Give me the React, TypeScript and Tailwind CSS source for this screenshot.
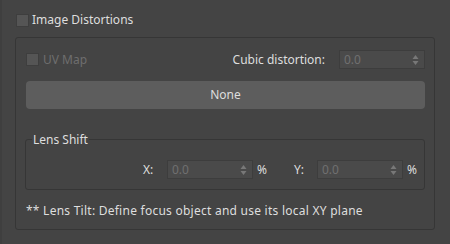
import React from "react";

const font = { fontFamily: '"Noto Sans", "Open Sans", sans-serif' };

function Spinner() {
  return (
    <svg width="7" height="12" viewBox="0 0 7 12" className="shrink-0">
      <path d="M3.5 1 L6.5 5 L0.5 5 Z" fill="#787878" />
      <path d="M3.5 11 L6.5 7 L0.5 7 Z" fill="#787878" />
    </svg>
  );
}

function NumInput() {
  return (
    <div className="w-[86px] h-[19px] bg-[#4a4a4a] border border-[#3d3d3d] flex items-center justify-between pl-[4px] pr-[5px]">
      <span className="text-[12px] text-[#707070] leading-none">0.0</span>
      <Spinner />
    </div>
  );
}

function CheckBox() {
  return <div className="w-[13px] h-[13px] bg-[#555555] border border-[#3e3e3e] shrink-0" />;
}

export default function App() {
  return (
    <div className="w-[450px] h-[244px] bg-[#444444] text-[#dedede] text-[12px] overflow-hidden border-l-[2px] border-[#3f3f3f]" style={font}>
      <div className="flex items-center gap-[3px] pl-[14px] pt-[13px] h-[27px]">
        <CheckBox />
        <span className="leading-none">Image Distortions</span>
      </div>
      <div className="ml-[13px] mt-[10px] w-[420px] h-[193px] border border-[#363636] rounded-[3px] pl-[10px] pr-[9px] pt-[12px]">
        <div className="flex items-center justify-between h-[19px]">
          <div className="flex items-center gap-[4px] text-[#6e6e6e]">
            <CheckBox />
            <span className="leading-none">UV Map</span>
          </div>
          <div className="flex items-center gap-[14px]">
            <span className="leading-none">Cubic distortion:</span>
            <NumInput />
          </div>
        </div>
        <div className="mt-[12px] h-[28px] bg-[#5d5d5d] rounded-[4px] flex items-center justify-center">
          <span className="leading-none">None</span>
        </div>
        <div className="relative mt-[30px] h-[51px] border border-[#363636] rounded-[3px] -ml-[1px] flex items-start justify-end pr-[6px] pt-[20px]">
          <span className="absolute left-[6px] -top-[8px] px-[1px] bg-[#444444] leading-[16px]">Lens Shift</span>
          <div className="flex items-center">
            <span className="leading-none w-[24px]">X:</span>
            <NumInput />
            <span className="leading-none ml-[4px] w-[11px]">%</span>
            <span className="leading-none ml-[26px] w-[23px]">Y:</span>
            <NumInput />
            <span className="leading-none ml-[4px] w-[11px]">%</span>
          </div>
        </div>
        <div className="mt-[13px] leading-[16px] tracking-[0.25px]">** Lens Tilt: Define focus object and use its local XY plane</div>
      </div>
    </div>
  );
}
